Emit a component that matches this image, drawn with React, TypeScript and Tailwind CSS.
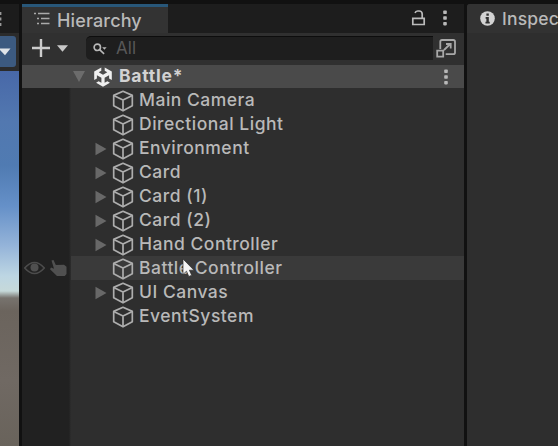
import React from "react";

const CubeIcon = () => (
  <svg className="h-[22px] w-[22px] shrink-0" viewBox="0 0 22 22" fill="none" stroke="#adadad" strokeWidth="1.7" strokeLinejoin="round">
    <path d="M11 1.3 20.3 5.4V15.8L11 20.8 1.7 15.8V5.4Z" />
    <path d="M1.7 5.4 11 10.1 20.3 5.4M11 10.1V20.8" />
  </svg>
);

const Foldout = () => (
  <svg className="h-3.5 w-3 shrink-0" viewBox="0 0 12 14">
    <path d="M.5.8 11.5 7 .5 13.2Z" fill="#686868" />
  </svg>
);

const Kebab = () => (
  <svg className="h-4 w-1.5 shrink-0" viewBox="0 0 6 16" fill="#b8b8b8">
    <rect x="1.2" y=".6" width="3.6" height="3.4" rx=".8" />
    <rect x="1.2" y="6.3" width="3.6" height="3.4" rx=".8" />
    <rect x="1.2" y="12" width="3.6" height="3.4" rx=".8" />
  </svg>
);

const UnityLogo = () => (
  <svg className="h-5 w-5 shrink-0" viewBox="0 0 20 20" fill="#efefef">
    <path d="M8.3.5v3.2L5.7 5.2 10 7.7l4.3-2.5-2.6-1.5V.5L18.8 4.6V13l-2.7-1.6V8.2L11.6 10.8v5l2.8-1.6 2.5 1.5L10 19.7 3.1 15.7l2.5-1.5 2.8 1.6v-5L3.9 8.2v3.2L1.2 13V4.6Z" />
  </svg>
);

const items = [
  { name: "Main Camera" },
  { name: "Directional Light" },
  { name: "Environment", fold: true },
  { name: "Card", fold: true },
  { name: "Card (1)", fold: true },
  { name: "Card (2)", fold: true },
  { name: "Hand Controller", fold: true },
  { name: "Battle Controller", hover: true },
  { name: "UI Canvas", fold: true },
  { name: "EventSystem" },
];

function SceneEdge() {
  return (
    <div className="flex w-[19px] shrink-0 flex-col">
      <div className="flex h-[29px] items-center bg-[#1c1c1c]">
        <svg className="h-4 w-1" viewBox="0 0 4 16" fill="#999999">
          <path d="M0 1h1.4v3H0zM0 6.5h1.4v3H0zM0 12h1.4v3H0z" />
        </svg>
      </div>
      <div className="h-[38px] bg-[#2b2b2b] pt-[3px]">
        <div className="flex h-[31px] w-[16px] items-center rounded-r-[3px] bg-[#3c5a80]">
          <svg className="h-2 w-[11px]" viewBox="0 0 11 8">
            <path d="M0 .5h10.5L5 7.3 0 2Z" fill="#e0e4e8" />
          </svg>
        </div>
      </div>
      <div className="flex-1 bg-[linear-gradient(180deg,#4868a8_0px,#5278b0_50px,#507bb2_95px,#6590c8_135px,#95b4d9_175px,#bdd6e3_205px,#c6d9da_220px,#77736e_227px,#6b645d_240px,#706963_310px,#69635b_375px)]" />
    </div>
  );
}

export default function App() {
  return (
    <div className="flex h-[446px] w-[558px] overflow-hidden bg-[#111111] pt-1 font-['Inter',sans-serif] text-[18px] text-[#b9b9b9]">
      <SceneEdge />
      <main className="ml-[3px] flex w-[442px] shrink-0 flex-col bg-[#2e2e2e]">
        <header className="flex h-[29px] shrink-0 bg-[#1d1d1d]">
          <div className="flex w-[146px] items-center border-t-[3px] border-[#285779] bg-[#333333] pl-3">
            <svg className="mb-0.5 h-3.5 w-4 shrink-0" viewBox="0 0 16 14" stroke="#aaaaaa" strokeWidth="1.7">
              <path d="M0 1.5h2M4 1.5h11.5M3 6.5h2M7 6.5h8.5M3 11.5h2M7 11.5h8.5" />
            </svg>
            <span className="ml-[7px] text-[18px] font-medium tracking-[0.15px]">Hierarchy</span>
          </div>
          <div className="flex flex-1 items-center justify-end pb-0.5 pr-4">
            <svg className="mr-4 h-[18px] w-[15px]" viewBox="0 0 15 18" fill="none" stroke="#bbbbbb" strokeWidth="1.7">
              <path d="M1.8 9.3h11.4v6.2H1.8ZM11.2 9.3V5a3 3 0 0 0-3-3H6.7a2.7 2.7 0 0 0-2.6 2" />
            </svg>
            <Kebab />
          </div>
        </header>
        <div className="flex h-8 shrink-0 items-center bg-[#303030] pb-0.5">
          <svg className="ml-[10px] h-[18px] w-[18px] shrink-0" viewBox="0 0 18 18" stroke="#cccccc" strokeWidth="2.4">
            <path d="M9 0v18M0 9h18" />
          </svg>
          <svg className="ml-[7px] h-[7px] w-[11px] shrink-0" viewBox="0 0 11 7">
            <path d="M0 .3h11L5.5 6.7Z" fill="#c8c8c8" />
          </svg>
          <div className="ml-[18px] flex h-6 w-[347px] shrink-0 items-center rounded-l-[5px] border-t border-[#0d0d0d] bg-[#1e1e1e] pl-[7px]">
            <svg className="h-3 w-3.5 shrink-0" viewBox="0 0 14 12" fill="none" stroke="#b8b8b8" strokeWidth="1.6">
              <circle cx="4.3" cy="4.3" r="3.2" />
              <path d="m6.6 6.6 4.5 4.3" />
              <path d="M9.2 4.2h4.4L11.4 6.8Z" fill="#b8b8b8" stroke="none" />
            </svg>
            <span className="ml-[9px] text-[17px] tracking-[0.1px] text-[#585858]">All</span>
          </div>
          <svg className="ml-[3px] h-[19px] w-[20px] shrink-0" viewBox="0 0 20 19" fill="none" stroke="#a8a8a8" strokeWidth="1.8">
            <path d="M4.3 10V2.8Q4.3 1 6 1h11.3Q19 1 19 2.8v10.6q0 1.7-1.7 1.7H9.7M1.2 11.7h6v6h-6ZM8 11l6.3-6M10 5h4.7v4.6" />
          </svg>
        </div>
        <div className="flex h-[23px] shrink-0 items-center bg-[#4a4a4a] pl-[51px] pr-[15px]">
          <svg className="h-[11px] w-3 shrink-0" viewBox="0 0 12 11">
            <path d="M0 0h12L6 11Z" fill="#6c6c6c" />
          </svg>
          <span className="ml-[8px] flex"><UnityLogo /></span>
          <span className="ml-[6px] text-[17.5px] font-bold tracking-[0.75px] text-[#d2d2d2]">Battle*</span>
          <span className="ml-auto flex"><Kebab /></span>
        </div>
        <div className="flex flex-1 flex-col bg-[linear-gradient(90deg,#212121_47px,#2e2e2e_49px)]">
          {items.map((item) => (
            <div key={item.name} className="flex h-6 shrink-0 items-center">
              <div className="flex w-[49px] shrink-0 items-center pl-0.5">
                {item.hover && (
                  <>
                    <svg className="h-3.5 w-[21px]" viewBox="0 0 21 14">
                      <path d="M.7 7Q10.5-4 20.3 7 10.5 18 .7 7Z" fill="none" stroke="#4c4c4c" strokeWidth="1.6" />
                      <circle cx="10.5" cy="6.5" r="4" fill="#505050" />
                    </svg>
                    <svg className="ml-1 h-[18px] w-[18px]" viewBox="0 0 18 18">
                      <path d="m2.5 1.5 2-.5 2.3 5 8.2-.3 2.5 2V15l-1.7 2H8L1 10.2l1-1.6 3 1.2Z" fill="#505050" />
                    </svg>
                  </>
                )}
              </div>
              <div className={item.hover ? "flex h-6 flex-1 items-center bg-[#3a3a3a] pl-6" : "flex h-6 flex-1 items-center pl-6"}>
                <div className="flex w-[17px] shrink-0 pt-px">{item.fold && <Foldout />}</div>
                <span className="mt-px flex shrink-0"><CubeIcon /></span>
                <span className="relative ml-[5px] whitespace-nowrap text-[17.5px] font-medium tracking-[0.5px]">
                  {item.name}
                  {item.hover && (
                    <svg className="absolute left-[43px] top-[3px] h-5 w-3.5" viewBox="0 0 14 20">
                      <path d="M1 1v15.5l3.5-3.3 2.3 5.3 2.9-1.3-2.3-5H12Z" fill="#f4f4f4" stroke="#2e2e2e" strokeWidth=".7" />
                    </svg>
                  )}
                </span>
              </div>
            </div>
          ))}
        </div>
      </main>
      <aside className="ml-[3px] flex-1 overflow-hidden rounded-tl-[3px] bg-[#2e2e2e]">
        <div className="flex h-[29px] items-center bg-[#323232] pl-[13px] pt-0.5">
          <svg className="mb-0.5 h-[15px] w-[15px] shrink-0" viewBox="0 0 16 16">
            <circle cx="8" cy="8" r="7.8" fill="#d2d2d2" />
            <path d="M6.8 2.7h2.6v2.4H6.8ZM6 6.5h3.4v5h1v1.7H5.8v-1.7h1V8.2H6Z" fill="#303030" />
          </svg>
          <span className="ml-[7px] whitespace-nowrap text-[17.5px] font-medium tracking-[0.2px]">Inspector</span>
        </div>
      </aside>
    </div>
  );
}
